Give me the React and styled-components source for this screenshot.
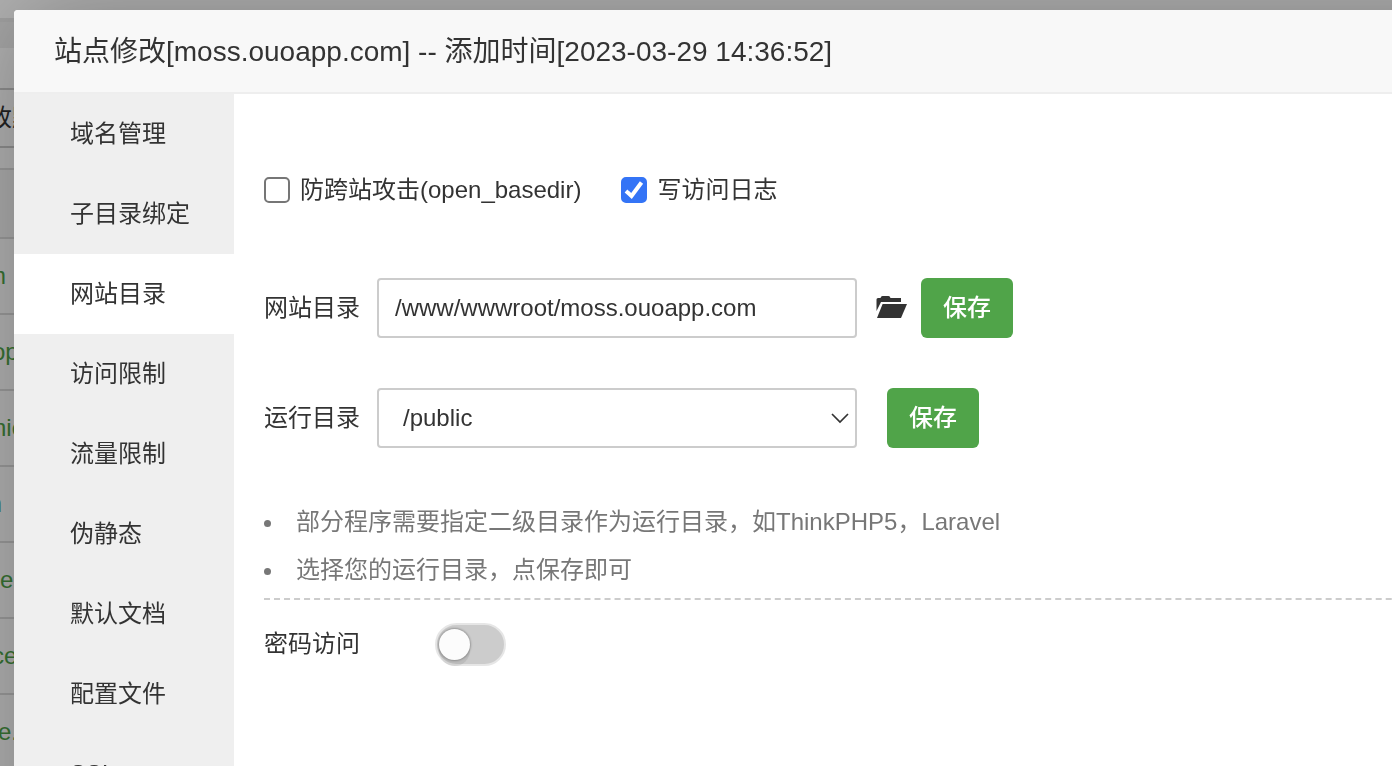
import React, { useState } from 'react'
import styled, { createGlobalStyle } from 'styled-components'

const GlobalStyle = createGlobalStyle`
  * {
    box-sizing: border-box;
  }
  body {
    margin: 0;
    overflow: hidden;
    background: #fff;
    color: #333;
    font-family: "Liberation Sans", "Noto Sans CJK SC", sans-serif;
    font-size: 24px;
  }
  button, input, select {
    font: inherit;
    color: inherit;
    margin: 0;
  }
`

const MENU = [
  '域名管理',
  '子目录绑定',
  '网站目录',
  '访问限制',
  '流量限制',
  '伪静态',
  '默认文档',
  '配置文件',
  'SSL'
]

// the site list is scrolled sideways, so names start left of the window
const SITES = [
  { name: 'm', scroll: 14 },
  { name: 'op', scroll: 8 },
  { name: 'nic', scroll: 7 },
  { name: 'm', scroll: 18 },
  { name: 'ce', scroll: 12 },
  { name: 'ce', scroll: 8 },
  { name: 'e.', scroll: 2 }
]

const Page = styled.div`
  overflow: hidden;
  white-space: nowrap;
`
const PageTop = styled.div`
  height: 18px;
`
const PageBand = styled.div`
  height: 30px;
  background: #f0f0f0;
  border-top: 4px solid #e8e8e8;
`
const PageTools = styled.div`
  height: 100px;
  padding-top: 40px;
  border-bottom: 2px solid #ccc;
`
const PageToolButton = styled.div`
  height: 58px;
  line-height: 56px;
  border-top: 2px solid #ccc;
  text-indent: -12px;
`
const PageTableHead = styled.div`
  height: 69px;
  margin-top: 20px;
  background: #f6f6f6;
  border-top: 2px solid #ddd;
`
const SiteRow = styled.div`
  height: 76px;
  line-height: 74px;
  border-top: 2px solid #ddd;
  color: #50a449;
  text-indent: -${props => props.$scroll}px;
`

const Shade = styled.div`
  position: fixed;
  inset: 0;
  background: rgba(0, 0, 0, 0.3);
`
const Dialog = styled.section`
  position: fixed;
  top: 10px;
  left: 14px;
  right: -200px;
  bottom: -200px;
  display: flex;
  flex-direction: column;
  overflow: hidden;
  background: #fff;
  border-radius: 4px;
  box-shadow: 2px 2px 100px rgba(0, 0, 0, 0.3);
`
const Title = styled.h1`
  margin: 0;
  padding: 2px 40px 0;
  line-height: 80px;
  font-size: 28px;
  font-weight: 400;
  background: #f8f8f8;
  border-bottom: 2px solid #eee;
`
const Body = styled.div`
  display: flex;
  flex: 1;
`
const Menu = styled.nav`
  width: 220px;
  flex: none;
  background: #efefef;
`
const MenuItem = styled.a`
  display: block;
  padding-left: 56px;
  line-height: 80px;
  color: #333;
  text-decoration: none;
  background: ${props => props.$active ? '#fff' : 'transparent'};
`
const Content = styled.main`
  flex: 1;
  padding: 72px 30px;
`

const Checks = styled.div`
  display: flex;
  gap: 40px;
  margin-bottom: 64px;
`
const CheckLabel = styled.label`
  display: flex;
  align-items: center;
  gap: 10px;
  line-height: 48px;
`
const CheckBox = styled.span`
  position: relative;
  display: flex;

  svg {
    position: absolute;
    inset: 0;
    pointer-events: none;
  }
`
const CheckInput = styled.input`
  appearance: none;
  width: 26px;
  height: 26px;
  background: #fff;
  border: 2px solid #767676;
  border-radius: 5px;

  &:checked {
    background: #3474f6;
    border-color: #3474f6;
  }
`

const Row = styled.div`
  display: flex;
  align-items: center;
  margin-bottom: 50px;
`
const RowLabel = styled.label`
  margin-right: 17px;
  line-height: 48px;
`
const PathInput = styled.input`
  width: 480px;
  height: 60px;
  padding: 0 16px;
  background: #fff;
  border: 2px solid #ccc;
  border-radius: 4px;
  outline: none;
`
const SelectWrap = styled.span`
  position: relative;
  display: flex;

  svg {
    position: absolute;
    top: 24px;
    right: 8px;
    pointer-events: none;
  }
`
const RunSelect = styled.select`
  appearance: none;
  width: 480px;
  height: 60px;
  padding: 0 24px 2px;
  background: #fff;
  border: 2px solid #ccc;
  border-radius: 4px;
  outline: none;
`
const FolderButton = styled.button`
  display: flex;
  margin-left: 19px;
  padding: 0;
  background: none;
  border: 0;
`
const SaveButton = styled.button`
  height: 60px;
  margin-left: ${props => props.$gap}px;
  padding: 0 22px;
  color: #fff;
  font-weight: 500;
  line-height: 60px;
  background: #50a449;
  border: 0;
  border-radius: 6px;
`

const Tips = styled.ul`
  margin: 0;
  padding: 0 0 4px;
  list-style: none;
  line-height: 48px;
  color: #777;
  border-bottom: 2px dashed #ccc;
`
const Tip = styled.li`
  display: flex;
  align-items: center;
  gap: 25px;

  &::before {
    content: '';
    width: 7px;
    height: 7px;
    margin-top: 3px;
    background: #777;
    border-radius: 50%;
  }
`
const AccessRow = styled.div`
  display: flex;
  align-items: center;
  gap: 75px;
  padding-top: 20px;
  line-height: 48px;
`
const Switch = styled.input`
  appearance: none;
  display: flex;
  align-items: center;
  justify-content: ${props => props.checked ? 'flex-end' : 'flex-start'};
  width: 71px;
  height: 43px;
  padding: 0 2px;
  background: ${props => props.checked ? '#50a449' : '#ccc'};
  border: 2px solid #e6e6e6;
  border-radius: 22px;

  &::before {
    content: '';
    width: 31px;
    height: 31px;
    background: #fcfcfc;
    border-radius: 50%;
    box-shadow: 0 0 2px 1px rgba(0, 0, 0, 0.25), 0 6px 0 rgba(0, 0, 0, 0.08);
  }
`

const Check = ({ label, defaultChecked }) => {
  const [checked, setChecked] = useState(defaultChecked)

  return (
    <CheckLabel>
      <CheckBox>
        <CheckInput
          type='checkbox'
          checked={checked}
          onChange={() => setChecked(prevState => !prevState)}
        />
        {
          checked &&
            <svg width='26' height='26' viewBox='0 0 26 26' fill='none'>
              <path d='M5 14L10.500 19L20.500 5.500' stroke='#fff' strokeWidth='4' />
            </svg>
        }
      </CheckBox>
      {label}
    </CheckLabel>
  )
}

const App = () => {
  const [active, setActive] = useState('网站目录')
  const [path, setPath] = useState('/www/wwwroot/moss.ouoapp.com')
  const [locked, setLocked] = useState(false)

  return (
    <>
      <GlobalStyle />
      <Page>
        <PageTop />
        <PageBand />
        <PageTools>
          <PageToolButton>改默</PageToolButton>
        </PageTools>
        <PageTableHead />
        {
          SITES.map(({ name, scroll }, i) => (
            <SiteRow key={i} $scroll={scroll}>{name}</SiteRow>
          ))
        }
      </Page>
      <Shade />
      <Dialog role='dialog' aria-labelledby='dialog-title'>
        <Title id='dialog-title'>
          站点修改[moss.ouoapp.com] -- 添加时间[2023-03-29 14:36:52]
        </Title>
        <Body>
          <Menu>
            {
              MENU.map(item => (
                <MenuItem
                  key={item}
                  href='#'
                  $active={item === active}
                  onClick={() => setActive(item)}
                >
                  {item}
                </MenuItem>
              ))
            }
          </Menu>
          <Content>
            <Checks>
              <Check label='防跨站攻击(open_basedir)' defaultChecked={false} />
              <Check label='写访问日志' defaultChecked />
            </Checks>
            <Row>
              <RowLabel htmlFor='site-path'>网站目录</RowLabel>
              <PathInput
                id='site-path'
                type='text'
                value={path}
                onChange={e => setPath(e.target.value)}
              />
              <FolderButton type='button' aria-label='folder'>
                <svg width='31' height='24' viewBox='0 0 31 24' fill='#333'>
                  <path d='M0.500 3.500Q0.500 2 2 2H4.500Q5 0 6.500 0H12.500Q14 0 14.500 2H25V6H5L0.500 15Z' />
                  <path d='M6.600 8H31L25 22H1Z' />
                </svg>
              </FolderButton>
              <SaveButton type='button' $gap={14}>保存</SaveButton>
            </Row>
            <Row>
              <RowLabel htmlFor='run-path'>运行目录</RowLabel>
              <SelectWrap>
                <RunSelect id='run-path' defaultValue='/public'>
                  <option value='/'>/</option>
                  <option value='/public'>/public</option>
                </RunSelect>
                <svg width='18' height='12' viewBox='0 0 18 12' fill='none'>
                  <path d='M1 2L9 10L17 2' stroke='#333' strokeWidth='1.700' />
                </svg>
              </SelectWrap>
              <SaveButton type='button' $gap={30}>保存</SaveButton>
            </Row>
            <Tips>
              <Tip>部分程序需要指定二级目录作为运行目录，如ThinkPHP5，Laravel</Tip>
              <Tip>选择您的运行目录，点保存即可</Tip>
            </Tips>
            <AccessRow>
              <label htmlFor='password-access'>密码访问</label>
              <Switch
                id='password-access'
                type='checkbox'
                role='switch'
                checked={locked}
                onChange={() => setLocked(prevState => !prevState)}
              />
            </AccessRow>
          </Content>
        </Body>
      </Dialog>
    </>
  )
}

export default App
